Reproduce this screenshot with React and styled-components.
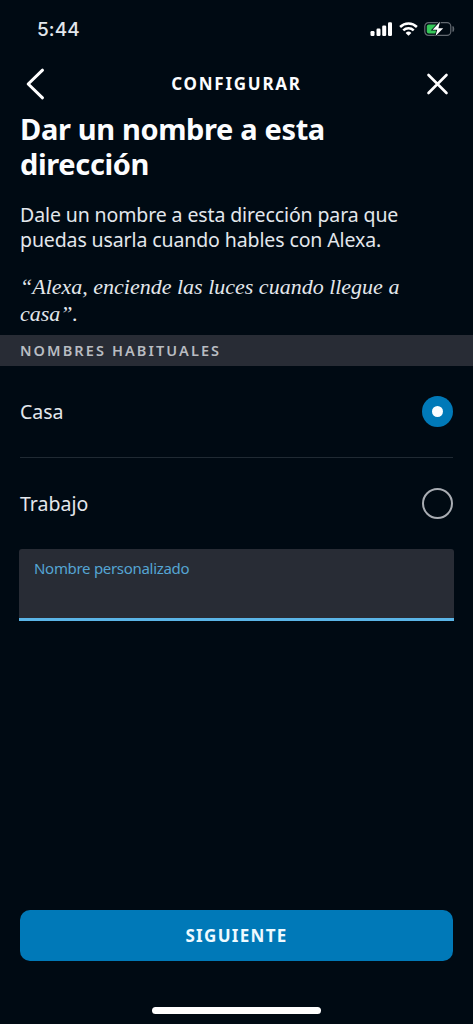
import React, { useState } from 'react';
import styled, { createGlobalStyle } from 'styled-components';

const GlobalStyles = createGlobalStyle`
  :root {
    --black: #000a13;
    --slate: #282c35;
    --blue: #0079b8;
    --lightBlue: #5bb5e7;
    --white: #fcfdff;
    --offWhite: #e3e7ec;
  }
  * {
    box-sizing: border-box;
  }
  body {
    margin: 0;
    background-color: var(--black);
  }
  h1, p {
    margin: 0;
  }
  button, input {
    border: 0;
    padding: 0;
    background: none;
    font-family: inherit;
    color: inherit;
  }
`;

const ScreenStyles = styled.div`
  display: flex;
  flex-direction: column;
  width: 100%;
  height: 1024px;
  overflow: hidden;
  background-color: var(--black);
  color: var(--offWhite);
  font-family: 'Noto Sans', 'Open Sans', sans-serif;
`;

const StatusBarStyles = styled.div`
  display: flex;
  justify-content: space-between;
  align-items: center;
  height: 58px;
  padding: 0 18px 0 37px;
  .time {
    font-family: Inter, sans-serif;
    font-size: 19px;
    font-weight: 500;
    letter-spacing: 0.1px;
  }
  .icons {
    display: flex;
    align-items: center;
    gap: 6px;
  }
  svg {
    display: block;
  }
`;

const HeaderStyles = styled.header`
  display: flex;
  justify-content: space-between;
  align-items: center;
  height: 52px;
  padding: 0 24px 1px 25px;
  button {
    display: flex;
  }
`;

const HeaderTitle = styled.span`
  color: var(--white);
  font-size: 17px;
  font-weight: 700;
  letter-spacing: 1.75px;
`;

const IntroStyles = styled.section`
  height: 225px;
  padding: 1px 20px 0;
  h1 {
    color: var(--white);
    font-size: 29px;
    font-weight: 700;
    letter-spacing: -0.35px;
    line-height: 35px;
    white-space: nowrap;
  }
  p {
    white-space: nowrap;
  }
`;

const Description = styled.p`
  padding-top: 21px;
  font-size: 19.5px;
  letter-spacing: -0.11px;
  line-height: 25px;
`;

const Quote = styled.p`
  padding-top: 21px;
  font-family: 'Liberation Serif', serif;
  font-size: 22px;
  font-style: italic;
  line-height: 27px;
`;

const SectionLabel = styled.div`
  display: flex;
  align-items: center;
  height: 31px;
  padding: 0 20px 1px;
  background-color: var(--slate);
  color: #b9bcc2;
  font-size: 14.5px;
  font-weight: 600;
  letter-spacing: 2.1px;
`;

const OptionStyles = styled.div`
  display: flex;
  justify-content: space-between;
  align-items: center;
  height: ${({ $divided }) => ($divided ? '92px' : '91px')};
  margin: 0 20px;
  border-bottom: ${({ $divided }) => ($divided ? '1px solid #202a33' : '0')};
  font-size: 19.5px;
  span {
    padding-bottom: 1px;
  }
`;

const Radio = styled.button`
  display: flex;
  justify-content: center;
  align-items: center;
  width: 31px;
  height: 31px;
  border: ${({ $checked }) => ($checked ? '0' : '2px solid #a9adb3')};
  border-radius: 50%;
  background-color: ${({ $checked }) => ($checked ? 'var(--blue)' : 'transparent')};
  &::after {
    content: '';
    width: 11px;
    height: 11px;
    border-radius: 50%;
    background-color: ${({ $checked }) => ($checked ? 'var(--white)' : 'transparent')};
  }
`;

const FieldStyles = styled.label`
  display: flex;
  flex-direction: column;
  height: 72px;
  margin: 0 19px;
  padding: 8px 15px 0;
  border-bottom: 3px solid var(--lightBlue);
  border-radius: 3px 3px 0 0;
  background-color: var(--slate);
  color: #55a5d3;
  font-size: 15px;
  letter-spacing: -0.3px;
  line-height: 22px;
  input {
    height: 30px;
    outline: 0;
    color: var(--white);
    font-size: 19px;
  }
`;

const FooterStyles = styled.footer`
  display: flex;
  flex-direction: column;
  align-items: center;
  margin-top: auto;
  padding: 0 20px 10px;
`;

const NextButton = styled.button`
  width: 100%;
  height: 51px;
  border-radius: 10px;
  background-color: var(--blue);
  color: #eefaff;
  font-size: 17px;
  font-weight: 700;
  letter-spacing: 1.3px;
`;

const HomeIndicator = styled.div`
  width: 169px;
  height: 7px;
  margin-top: 46px;
  border-radius: 4px;
  background-color: #fff;
`;

const StatusBar = () => (
  <StatusBarStyles>
    <span className="time">5:44</span>
    <div className="icons">
      <svg width="23" height="14" viewBox="0 0 23 14" fill="#fff">
        <rect x="0.5" y="9" width="4" height="5" rx="1.2" />
        <rect x="6.5" y="6.5" width="4" height="7.5" rx="1.2" />
        <rect x="12.2" y="3.5" width="4" height="10.5" rx="1.2" />
        <rect x="18" y="0.3" width="4" height="13.7" rx="1.2" />
      </svg>
      <svg width="19" height="14" viewBox="0 0 19 14" fill="none" stroke="#fff" strokeWidth="2.5">
        <path d="M1.1 5a12 12 0 0 1 16.8 0" />
        <path d="M4.3 8.4a7.4 7.4 0 0 1 10.4 0" />
        <path d="M9.5 13.8 6.6 10.9a4.1 4.1 0 0 1 5.8 0Z" fill="#fff" stroke="none" />
      </svg>
      <svg width="31" height="16" viewBox="0 0 31 16">
        <rect x="0.8" y="1.6" width="26" height="12.8" rx="3.8" fill="none" stroke="#626970" strokeWidth="1.2" />
        <path d="M29 5.5q1.7 2.5 0 5Z" fill="#626970" stroke="#626970" />
        <rect x="2.8" y="3.4" width="11" height="9.2" rx="2" fill="#36c759" />
        <path
          d="M16 0.8 8.6 8.7h4.6L11.4 15.2 19.2 7.2h-4.8Z"
          fill="#fff"
          stroke="#000a13"
          strokeWidth="1.6"
          paintOrder="stroke"
        />
      </svg>
    </div>
  </StatusBarStyles>
);

const Header = () => (
  <HeaderStyles>
    <button type="button" aria-label="Atrás">
      <svg width="22" height="32" viewBox="0 0 22 32" fill="none" stroke="#fff" strokeWidth="3">
        <path d="M17.5 2.2 3.2 16 17.5 29.8" strokeLinecap="round" strokeLinejoin="round" />
      </svg>
    </button>
    <HeaderTitle>CONFIGURAR</HeaderTitle>
    <button type="button" aria-label="Cerrar">
      <svg width="23" height="22" viewBox="0 0 23 22" fill="none" stroke="#fff" strokeWidth="2.6">
        <path d="M2.5 2 20.5 20M20.5 2 2.5 20" strokeLinecap="round" />
      </svg>
    </button>
  </HeaderStyles>
);

const Option = ({ name, checked, divided, onSelect }) => (
  <OptionStyles $divided={divided}>
    <span>{name}</span>
    <Radio
      type="button"
      role="radio"
      aria-label={name}
      aria-checked={checked}
      $checked={checked}
      onClick={onSelect}
    />
  </OptionStyles>
);

const App = () => {
  const [selected, setSelected] = useState('Casa');
  return (
    <>
      <GlobalStyles />
      <ScreenStyles>
        <StatusBar />
        <Header />
        <IntroStyles>
          <h1>
            Dar un nombre a esta
            <br />
            dirección
          </h1>
          <Description>
            Dale un nombre a esta dirección para que
            <br />
            puedas usarla cuando hables con Alexa.
          </Description>
          <Quote>
            “Alexa, enciende las luces cuando llegue a
            <br />
            casa”.
          </Quote>
        </IntroStyles>
        <SectionLabel>NOMBRES HABITUALES</SectionLabel>
        <Option name="Casa" divided checked={selected === 'Casa'} onSelect={() => setSelected('Casa')} />
        <Option name="Trabajo" checked={selected === 'Trabajo'} onSelect={() => setSelected('Trabajo')} />
        <FieldStyles>
          Nombre personalizado
          <input type="text" />
        </FieldStyles>
        <FooterStyles>
          <NextButton type="button">SIGUIENTE</NextButton>
          <HomeIndicator />
        </FooterStyles>
      </ScreenStyles>
    </>
  );
};

export default App;
